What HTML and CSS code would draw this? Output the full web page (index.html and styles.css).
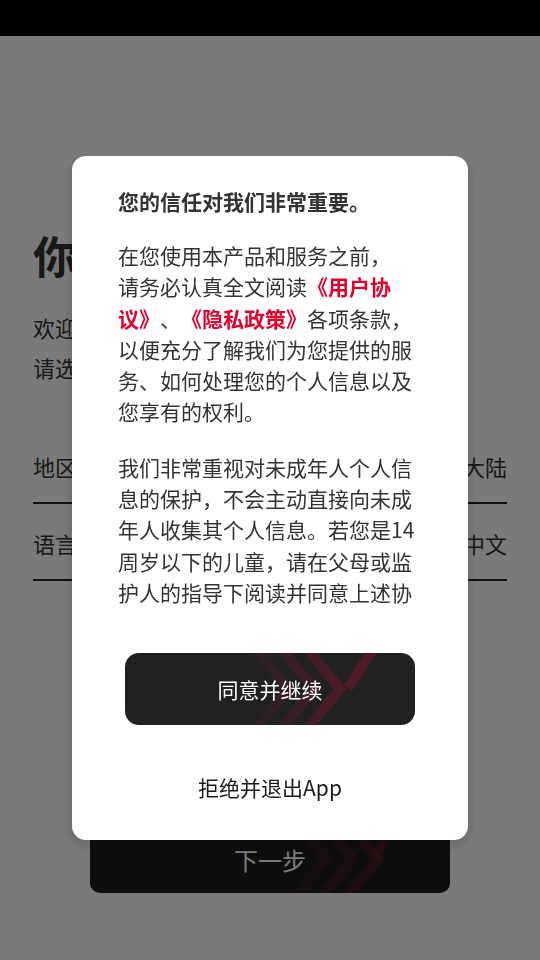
FILE: index.html
```html
<!DOCTYPE html>
<html lang="zh-CN">
<head>
    <meta charset="UTF-8">
    <meta name="viewport" content="width=device-width, initial-scale=1">
    <title>隐私协议</title>
    <link rel="stylesheet" href="styles.css">
</head>
<body>

    <div class="status-bar"></div>

    <main class="page">
        <h1 class="hello">你好</h1>
        <p class="intro">欢迎使用本应用<br>请选择您所在的地区和语言</p>

        <div class="setting-row">
            <span>地区</span>
            <span>中国大陆</span>
        </div>
        <div class="setting-row">
            <span>语言</span>
            <span>简体中文</span>
        </div>

        <button class="next-button">
            <svg class="stripes" viewBox="0 0 360 68" preserveAspectRatio="none">
                <defs>
                    <linearGradient id="fadeNext" gradientUnits="userSpaceOnUse" x1="170" y1="0" x2="300" y2="0">
                        <stop offset="0" stop-color="#7a1a2c" stop-opacity="0"/>
                        <stop offset="1" stop-color="#7a1a2c" stop-opacity="0.5"/>
                    </linearGradient>
                </defs>
                <g fill="none" stroke="url(#fadeNext)" stroke-width="10">
                    <polyline points="207,-2 236,34 207,70"/>
                    <polyline points="233,-2 262,34 233,70"/>
                    <polyline points="259,-2 288,34 259,70"/>
                    <line x1="306" y1="-2" x2="285" y2="32"/>
                </g>
            </svg>
            <span>下一步</span>
        </button>
    </main>

    <div class="overlay">
        <div class="dialog">
            <div class="dialog-body">
                <h2 class="dialog-title">您的信任对我们非常重要。</h2>
                <p>在您使用本产品和服务之前，<br>请务必认真全文阅读<a class="link">《用户协议》</a>、<a class="link">《隐私政策》</a>各项条款，以便充分了解我们为您提供的服务、如何处理您的个人信息以及您享有的权利。</p>
                <p>我们非常重视对未成年人个人信息的保护，不会主动直接向未成年人收集其个人信息。若您是14周岁以下的儿童，请在父母或监护人的指导下阅读并同意上述协议。如您不同意，请停止使用本产品。</p>
            </div>

            <button class="agree-button">
                <svg class="stripes" viewBox="0 0 290 72" preserveAspectRatio="none">
                    <defs>
                        <linearGradient id="fadeAgree" gradientUnits="userSpaceOnUse" x1="105" y1="0" x2="225" y2="0">
                            <stop offset="0" stop-color="#8a1430" stop-opacity="0"/>
                            <stop offset="1" stop-color="#8a1430" stop-opacity="0.45"/>
                        </linearGradient>
                    </defs>
                    <g fill="none" stroke="url(#fadeAgree)" stroke-width="10">
                        <polyline points="132,-2 163,36 132,74"/>
                        <polyline points="158,-2 189,36 158,74"/>
                        <polyline points="184,-2 215,36 184,74"/>
                        <line x1="247" y1="-2" x2="223" y2="35"/>
                    </g>
                </svg>
                <span>同意并继续</span>
            </button>

            <button class="reject-button">拒绝并退出App</button>
        </div>
    </div>

</body>
</html>
```

FILE: styles.css
```css
* {
    box-sizing: border-box;
}
body {
    margin: 0;
    width: 540px;
    height: 960px;
    overflow: hidden;
    background-color: #fff;
    font-family: "Noto Sans CJK SC", "Noto Sans", sans-serif;
    color: #333;
    text-spacing-trim: space-all;
}
.status-bar {
    height: 36px;
    background-color: #000;
}
.page {
    padding: 0 33px;
}
.hello {
    margin: 191px 0 0;
    font-size: 44px;
    line-height: 56px;
    font-weight: bold;
    color: #333;
}
.intro {
    margin: 24px 0 0;
    font-size: 22px;
    line-height: 40px;
}
.setting-row {
    display: flex;
    justify-content: space-between;
    padding: 24px 0 21px;
    font-size: 22px;
    line-height: 30px;
    border-bottom: 2px solid #222;
}
.setting-row:first-of-type {
    margin-top: 40px;
}
button {
    font-family: inherit;
    border: none;
    cursor: pointer;
    padding: 0;
}
.stripes {
    position: absolute;
    top: 0;
    left: 0;
    width: 100%;
    height: 100%;
}
.next-button {
    position: relative;
    overflow: hidden;
    display: block;
    width: 360px;
    height: 68px;
    margin: 244px auto 0;
    border-radius: 10px;
    background-color: #1f1f1f;
    color: #fff;
    font-size: 24px;
}
.next-button span,
.agree-button span {
    position: relative;
}

/* dialog */
.overlay {
    position: fixed;
    top: 36px;
    left: 0;
    right: 0;
    bottom: 0;
    background-color: rgba(0, 0, 0, 0.52);
    display: flex;
    align-items: center;
    justify-content: center;
}
.dialog {
    width: 396px;
    height: 684px;
    padding-top: 30px;
    background-color: #fff;
    border-radius: 14px;
    box-shadow: 0 4px 5px 4px rgba(0, 0, 0, 0.09);
    display: flex;
    flex-direction: column;
}
.dialog-body {
    height: 422px;
    overflow: hidden;
    padding: 0 46px;
    font-size: 21px;
    line-height: 31.2px;
    color: #333;
}
.dialog-title {
    margin: 0 0 23px;
    font-size: 21px;
    line-height: 31.2px;
    font-weight: bold;
}
.dialog-body p {
    margin: 0 0 24.5px;
}
.link {
    color: #e5002b;
    font-weight: bold;
}
.agree-button {
    position: relative;
    overflow: hidden;
    height: 72px;
    margin: 45px 53px 0;
    border-radius: 14px;
    background-color: #212121;
    color: #fff;
    font-size: 21px;
}
.reject-button {
    height: 72px;
    margin: 26px 53px 0;
    background: none;
    color: #1a1a1a;
    font-size: 21px;
}
```
